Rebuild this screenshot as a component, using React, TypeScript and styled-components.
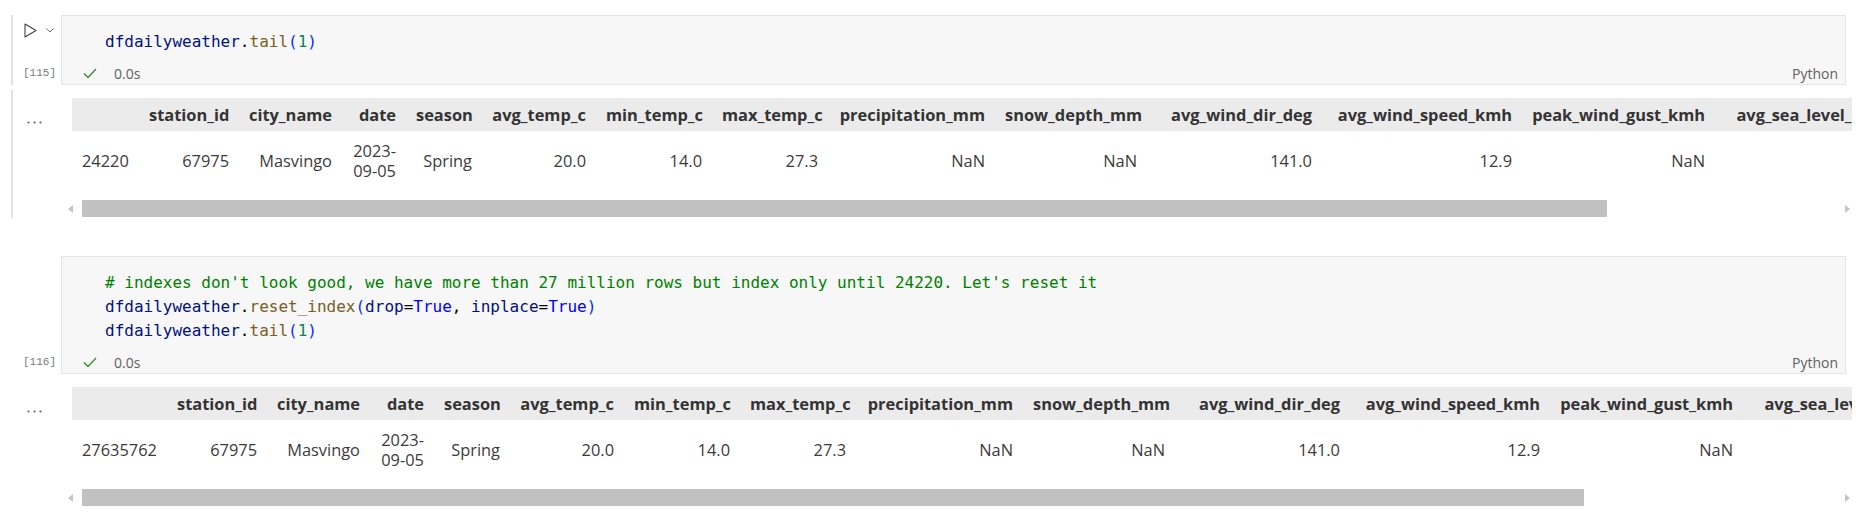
import React from 'react';
import styled, { createGlobalStyle } from 'styled-components';

const GlobalStyle = createGlobalStyle`
  html, body {
    margin: 0;
    padding: 0;
    background: #fff;
  }
  body {
    font-family: 'Open Sans', 'Noto Sans', sans-serif;
    color: #3b3b3b;
  }
`;

const Notebook = styled.div`
  width: 1865px;
  height: 515px;
  overflow: hidden;
  padding-top: 15px;
  box-sizing: border-box;
`;

const CellRow = styled.div<{ $gap?: number }>`
  display: grid;
  grid-template-columns: 61px 1fr;
  margin-right: 19px;
  margin-top: ${p => p.$gap ?? 0}px;
`;

const Gutter = styled.div<{ $focused?: boolean }>`
  margin-left: 11px;
  border-left: 2px solid ${p => (p.$focused ? '#e2e2e2' : 'transparent')};
  display: flex;
  flex-direction: column;
  justify-content: ${p => (p.$focused ? 'space-between' : 'flex-end')};
  padding: 8px 0 1px 10px;
`;

const RunControls = styled.div`
  display: flex;
  align-items: flex-start;
  gap: 9px;
  margin-left: 1px;
`;

const ExecCount = styled.div`
  height: 22px;
  line-height: 22px;
  font-family: 'Liberation Mono', 'DejaVu Sans Mono', monospace;
  font-size: 11px;
  color: #7a7a7a;
`;

const CodeBox = styled.div`
  background: #f7f7f7;
  border: 1px solid #e5e5e5;
  padding-top: 14px;
`;

const CodeLines = styled.pre`
  margin: 0;
  padding-left: 43px;
  font-family: 'DejaVu Sans Mono', 'Liberation Mono', monospace;
  font-size: 16px;
  line-height: 24px;
  color: #000;
`;

const tokenColors = {
  var: '#001080',
  fn: '#795e26',
  paren: '#0431fa',
  num: '#098658',
  kw: '#0000ff',
  op: '#000000',
  comment: '#008000',
};

type TokenKind = keyof typeof tokenColors;

const Tok = styled.span<{ $kind: TokenKind }>`
  color: ${p => tokenColors[p.$kind]};
`;

const StatusBar = styled.div`
  margin-top: 8px;
  height: 22px;
  display: flex;
  align-items: center;
  gap: 17px;
  padding: 0 7px 0 21px;
  font-size: 14px;
  color: #616161;
`;

const Lang = styled.span`
  margin-left: auto;
`;

const OutputRow = styled.div`
  display: grid;
  grid-template-columns: 61px 1fr;
  margin-top: 5px;
  margin-right: 13px;
`;

const OutputGutter = styled.div<{ $focused?: boolean }>`
  margin-left: 11px;
  border-left: 2px solid ${p => (p.$focused ? '#e2e2e2' : 'transparent')};
  padding: 17px 0 0 14px;
`;

const OutputBody = styled.div`
  padding: 8px 0 1px;
  min-width: 0;
`;

const TableViewport = styled.div`
  margin-left: 11px;
  overflow: hidden;
`;

const Frame = styled.table<{ $width: number }>`
  table-layout: fixed;
  border-collapse: collapse;
  width: ${p => p.$width}px;
  font-size: 16.4px;
`;

const HeadRow = styled.tr`
  background: #ebebeb;
`;

const HeadCell = styled.th`
  padding: 5px 10px;
  line-height: 23px;
  font-weight: 700;
  text-align: right;
  white-space: nowrap;
  overflow: hidden;
  color: #333;
`;

const Cell = styled.td<{ $index?: boolean }>`
  padding: 10px;
  line-height: 20px;
  text-align: ${p => (p.$index ? 'left' : 'right')};
  vertical-align: middle;
  color: #3b3b3b;
`;

const ScrollBar = styled.div`
  display: flex;
  align-items: center;
  height: 17px;
  margin: 9px -4px 0 1px;
`;

const ScrollButton = styled.div`
  width: 17px;
  height: 17px;
  display: flex;
  align-items: center;
  justify-content: center;
`;

const Track = styled.div`
  flex: 1;
  height: 17px;
  padding-left: 3px;
`;

const Thumb = styled.div<{ $w: number }>`
  width: ${p => p.$w}px;
  height: 17px;
  background: #c1c1c1;
`;

type Token = [TokenKind, string];

const tail: Token[] = [
  ['var', 'dfdailyweather'],
  ['op', '.'],
  ['fn', 'tail'],
  ['paren', '('],
  ['num', '1'],
  ['paren', ')'],
];

const cell1: Token[][] = [tail];

const cell2: Token[][] = [
  [['comment', "# indexes don't look good, we have more than 27 million rows but index only until 24220. Let's reset it"]],
  [
    ['var', 'dfdailyweather'],
    ['op', '.'],
    ['fn', 'reset_index'],
    ['paren', '('],
    ['var', 'drop'],
    ['op', '='],
    ['kw', 'True'],
    ['op', ', '],
    ['var', 'inplace'],
    ['op', '='],
    ['kw', 'True'],
    ['paren', ')'],
  ],
  tail,
];

const columns = [
  'station_id', 'city_name', 'date', 'season', 'avg_temp_c', 'min_temp_c', 'max_temp_c',
  'precipitation_mm', 'snow_depth_mm', 'avg_wind_dir_deg', 'avg_wind_speed_kmh',
  'peak_wind_gust_kmh', 'avg_sea_level_pres_hpa', 'sunshine_total_min',
];
const widths = [100, 103, 64, 76, 114, 116, 116, 167, 152, 175, 200, 193, 220, 170];
const row: React.ReactNode[] = [
  '67975', 'Masvingo', <>2023-<wbr />09-05</>, 'Spring', '20.0', '14.0', '27.3',
  'NaN', 'NaN', '141.0', '12.9', 'NaN', 'NaN', 'NaN',
];

function RunIcon() {
  return (
    <svg width="13" height="15" viewBox="0 0 13 15">
      <path d="M1 1 L12 7.5 L1 14 Z" fill="none" stroke="#424242" strokeWidth="1.1" strokeLinejoin="round" />
    </svg>
  );
}

function Chevron() {
  return (
    <svg width="8" height="5" viewBox="0 0 8 5" style={{ marginTop: 5 }}>
      <path d="M0.5 0.5 L4 4 L7.5 0.5" fill="none" stroke="#6a6a6a" strokeWidth="1" />
    </svg>
  );
}

function Check() {
  return (
    <svg width="14" height="11" viewBox="0 0 14 11">
      <path d="M1 5.5 L5 9.5 L13 1" fill="none" stroke="#388a34" strokeWidth="1.3" />
    </svg>
  );
}

function Dots() {
  return (
    <svg width="15" height="3" viewBox="0 0 15 3">
      <circle cx="1.5" cy="1.5" r="1.1" fill="#616161" />
      <circle cx="7.5" cy="1.5" r="1.1" fill="#616161" />
      <circle cx="13.5" cy="1.5" r="1.1" fill="#616161" />
    </svg>
  );
}

function Arrow({ dir }: { dir: 'left' | 'right' }) {
  return (
    <svg width="5" height="8" viewBox="0 0 5 8">
      <path d={dir === 'left' ? 'M5 0 L0 4 L5 8 Z' : 'M0 0 L5 4 L0 8 Z'} fill="#c4c4c4" />
    </svg>
  );
}

function CodeCell({ count, lines, focused, gap }: { count: number; lines: Token[][]; focused?: boolean; gap?: number }) {
  return (
    <CellRow $gap={gap}>
      <Gutter $focused={focused}>
        {focused && (
          <RunControls>
            <RunIcon />
            <Chevron />
          </RunControls>
        )}
        <ExecCount>[{count}]</ExecCount>
      </Gutter>
      <CodeBox>
        <CodeLines>
          {lines.map((line, i) => (
            <div key={i}>
              {line.map(([kind, text], j) => (
                <Tok key={j} $kind={kind}>{text}</Tok>
              ))}
            </div>
          ))}
        </CodeLines>
        <StatusBar>
          <Check />
          <span>0.0s</span>
          <Lang>Python</Lang>
        </StatusBar>
      </CodeBox>
    </CellRow>
  );
}

function DataFrameOutput({ index, indexWidth, thumb, focused }: { index: string; indexWidth: number; thumb: number; focused?: boolean }) {
  const total = indexWidth + widths.reduce((a, b) => a + b, 0);
  return (
    <OutputRow>
      <OutputGutter $focused={focused}>
        <Dots />
      </OutputGutter>
      <OutputBody>
        <TableViewport>
          <Frame $width={total}>
            <colgroup>
              <col style={{ width: indexWidth }} />
              {widths.map((w, i) => (
                <col key={i} style={{ width: w }} />
              ))}
            </colgroup>
            <thead>
              <HeadRow>
                <HeadCell />
                {columns.map(c => (
                  <HeadCell key={c}>{c}</HeadCell>
                ))}
              </HeadRow>
            </thead>
            <tbody>
              <tr>
                <Cell $index>{index}</Cell>
                {row.map((v, i) => (
                  <Cell key={i}>{v}</Cell>
                ))}
              </tr>
            </tbody>
          </Frame>
        </TableViewport>
        <ScrollBar>
          <ScrollButton>
            <Arrow dir="left" />
          </ScrollButton>
          <Track>
            <Thumb $w={thumb} />
          </Track>
          <ScrollButton>
            <Arrow dir="right" />
          </ScrollButton>
        </ScrollBar>
      </OutputBody>
    </OutputRow>
  );
}

export default function App() {
  return (
    <>
      <GlobalStyle />
      <Notebook>
        <CodeCell count={115} lines={cell1} focused />
        <DataFrameOutput index="24220" indexWidth={67} thumb={1525} focused />
        <CodeCell count={116} lines={cell2} gap={38} />
        <DataFrameOutput index="27635762" indexWidth={95} thumb={1502} />
      </Notebook>
    </>
  );
}
